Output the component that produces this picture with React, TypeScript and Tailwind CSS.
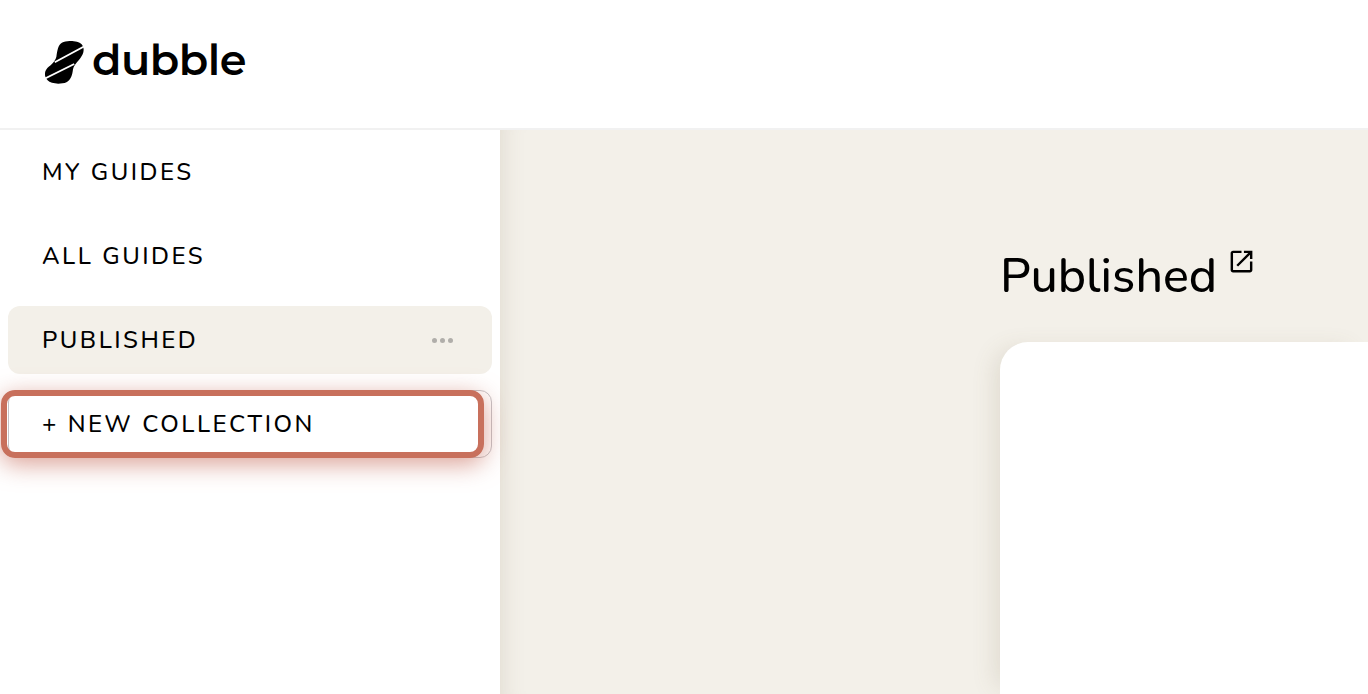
const FONT = 'font-["Nunito","Noto_Sans","Open_Sans",sans-serif]'

function Logo() {
  return (
    <svg width="39" height="43" viewBox="16 8 120 142" preserveAspectRatio="none" className="shrink-0 mt-[5px]">
      <path d="M68 14C86 4 122 6 131 22C140 38 132 54 124 66C114 80 106 86 102 102C100 120 96 136 82 144C64 152 34 150 24 138C12 124 14 108 24 96C36 86 46 78 51 60C54 40 56 22 68 14Z" fill="#000" />
      <path d="M46 78L140 24M12 134L106 84" stroke="#fff" strokeWidth="5.5" fill="none" />
    </svg>
  )
}

function ExternalIcon() {
  return (
    <svg width="29" height="29" viewBox="0 0 24 24" fill="#000">
      <path d="M19 19H5V5h7V3H5c-1.11 0-2 .9-2 2v14c0 1.1.89 2 2 2h14c1.1 0 2-.9 2-2v-7h-2v7zM14 3v2h3.59l-9.83 9.83 1.41 1.41L19 6.41V10h2V3h-7z" />
    </svg>
  )
}

function NavItem({ label }: { label: string }) {
  return (
    <div className="h-[68px] px-[34px] flex items-center font-medium text-[24px] tracking-[2.5px] text-black">
      {label}
    </div>
  )
}

export default function App() {
  return (
    <div className={`w-[1368px] h-[694px] overflow-hidden bg-white flex flex-col ${FONT}`}>
      <header className="h-[130px] shrink-0 border-b-2 border-[#f1f1f1] flex items-center pl-[45px] pb-[9px] gap-[8px]">
        <Logo />
        <span className='font-["Montserrat","Inter",sans-serif] font-semibold text-[43px] leading-none tracking-[-0.5px] text-black'>dubble</span>
      </header>

      <div className="flex flex-1 min-h-0">
        <aside className="w-[500px] shrink-0 bg-white px-2 pt-[8px] flex flex-col gap-4">
          <NavItem label="MY GUIDES" />
          <NavItem label="ALL GUIDES" />
          <div className="h-[68px] pl-[34px] pr-[38px] flex items-center justify-between rounded-[12px] bg-[#f3f0e9] font-medium text-[24px] tracking-[2.5px] text-black">
            PUBLISHED
            <div className="flex gap-[3px] mr-[1px]">
              <span className="w-[5px] h-[5px] rounded-full bg-[#b0aeaa]" />
              <span className="w-[5px] h-[5px] rounded-full bg-[#b0aeaa]" />
              <span className="w-[5px] h-[5px] rounded-full bg-[#b0aeaa]" />
            </div>
          </div>
          <div className="relative h-[68px] px-[33px] flex items-center rounded-[12px] border border-[#c4c2c6] bg-white font-medium text-[24px] tracking-[2.5px] text-black">
            + NEW COLLECTION
            <div className="absolute -left-[8px] -top-px w-[483px] h-[68px] rounded-[14px] border-[6px] border-[#c8705c] shadow-[0_6px_24px_rgba(199,111,93,0.65)]" />
          </div>
        </aside>

        <main className="flex-1 min-w-0 bg-[#f3f0e9] flex shadow-[inset_24px_0_24px_-24px_rgba(120,100,70,0.18)]">
          <div className="ml-[500px] flex-1 flex flex-col pt-[112px]">
            <div className="flex items-start h-[100px]">
              <h1 className="font-medium text-[48.3px] leading-[68px] text-black">Published</h1>
              <div className="ml-[10px] mt-[5px]"><ExternalIcon /></div>
            </div>
            <div className="flex-1 bg-white rounded-tl-[28px] shadow-[-12px_0_24px_-8px_rgba(120,100,70,0.16)]" />
          </div>
        </main>
      </div>
    </div>
  )
}
